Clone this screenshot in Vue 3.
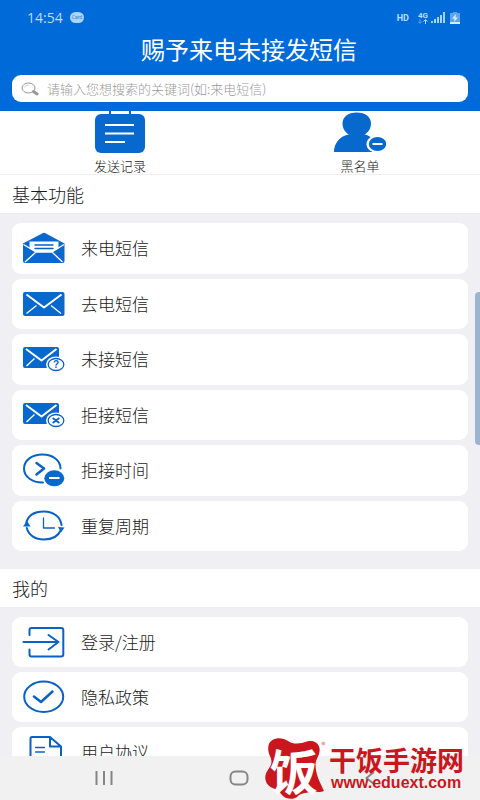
<script setup>
import { ref } from 'vue'

const keyword = ref('')

const basicItems = [
  { icon: 'open', label: '来电短信' },
  { icon: 'mail', label: '去电短信' },
  { icon: 'missed', label: '未接短信' },
  { icon: 'reject', label: '拒接短信' },
  { icon: 'time', label: '拒接时间' },
  { icon: 'cycle', label: '重复周期' }
]

const mineItems = [
  { icon: 'login', label: '登录/注册' },
  { icon: 'privacy', label: '隐私政策' },
  { icon: 'terms', label: '用户协议' }
]

const sections = [
  { title: '基本功能', items: basicItems, name: 'basic' },
  { title: '我的', items: mineItems, name: 'mine' }
]
</script>

<template>
  <div class="screen">
    <header class="top">
      <div class="status">
        <span class="clock">14:54</span>
        <span class="chip">Card</span>
        <span class="hd">HD</span>
        <span class="net">
          <span>4G</span>
          <svg width="10" height="5" viewBox="0 0 10 5" aria-hidden="true">
            <path d="M2 0V4M0 2.500L2 4.500L4 2.500" class="dim" />
            <path d="M7.500 5V1M5.500 2.500L7.500 .5L9.500 2.500" />
          </svg>
        </span>
        <svg class="signal" width="14" height="11" viewBox="0 0 14 11" aria-hidden="true">
          <path d="M0 9h2v2H0zM3 7h2v4H3zM6 5h2v6H6zM9 3h2v8H9zM12 0h2v11h-2z" />
        </svg>
        <svg class="battery" width="10" height="12" viewBox="0 0 10 12" aria-hidden="true">
          <path class="cell" d="M3 0h4v1h3v11H0V1h3z" />
          <path class="charge" d="M0 10h10v2H0z" />
          <path class="bolt" d="M6 2L2 6.500H4.500L4 10L8 5.500H5.500z" />
        </svg>
      </div>
      <h1>赐予来电未接发短信</h1>
      <label class="search">
        <svg width="18" height="14" viewBox="0 0 18 14" aria-hidden="true">
          <ellipse cx="7.500" cy="6" rx="6.500" ry="5" />
          <path d="M3.500 5.500Q4.500 3 7.500 3" class="glint" />
          <path d="M12.500 9.500L16 12" class="handle" />
        </svg>
        <input v-model="keyword" type="search" aria-label="搜索" placeholder="请输入您想搜索的关键词(如:来电短信)" />
      </label>
    </header>

    <main class="content">
      <div class="quick">
        <button type="button">
          <svg width="52" height="44" viewBox="0 0 52 44" aria-hidden="true">
            <path class="fill" d="M15 0h2v4h-2zM35 0h2v4h-2z" />
            <rect class="fill" x="1" y="3" width="50" height="39" rx="6" />
            <path class="paper" d="M11 14H40M11 22.500H40M11 31H31" />
          </svg>
          <span>发送记录</span>
        </button>
        <button type="button">
          <svg width="52" height="44" viewBox="0 0 52 44" aria-hidden="true">
            <path class="fill" d="M0 41C0 32 6 25 15 23.500C11 21.500 8.500 17 8.500 12.500C8.500 6 14 1.500 22.700 1.500S37 6 37 12.500C37 17 34.500 21.500 30.500 23.500C34 24 36 25.500 38 27.500V41z" />
            <ellipse cx="43.500" cy="33" rx="11" ry="9" fill="#fff" />
            <ellipse class="fill" cx="43.500" cy="33" rx="8.700" ry="6.900" />
            <path class="paper" d="M38.500 33H48.500" />
          </svg>
          <span>黑名单</span>
        </button>
      </div>

      <section v-for="section in sections" :key="section.name">
        <h2>{{ section.title }}</h2>
        <ul :class="section.name">
          <li v-for="item in section.items" :key="item.icon">
            <button type="button" class="row">
              <svg width="44" height="36" viewBox="0 0 44 36" aria-hidden="true">
                <g v-if="item.icon === 'open'">
                  <path class="fill" d="M1 13.500L20.500 3.200Q22 2.400 23.500 3.200L42.500 13.500V31Q42.500 33 40.500 33H3Q1 33 1 31z" />
                  <path fill="#fff" d="M7.500 11.500H36.500V18.500L30 22H14L7.500 18.500z" />
                  <path class="cut thin" d="M1.500 14.500L14 22H30L42 14.500M3 32L13.500 22.500M40.500 32L30.500 22.500" />
                  <path class="line thin" d="M13 15H31M13 18.500H31" />
                </g>
                <g v-else-if="item.icon === 'mail'">
                  <rect class="fill" x="1" y="6" width="41.500" height="24" rx="2" />
                  <path class="cut" d="M4.500 8.500L22 21.500L39.500 8.500" />
                  <path class="cut thin" d="M4.500 27.500L14.500 19.500M39 27.500L29 19.500" />
                </g>
                <g v-else-if="item.icon === 'missed' || item.icon === 'reject'">
                  <rect class="fill" x="1" y="6" width="36" height="21" rx="2" />
                  <path class="cut" d="M4 8L19.500 19.500L34.500 8" />
                  <path class="cut thin" d="M4.500 25L12.500 17.500" />
                  <ellipse cx="34" cy="23.500" rx="10" ry="8" fill="#fff" />
                  <ellipse class="line thin" cx="34" cy="23.500" rx="7.800" ry="6" />
                  <text v-if="item.icon === 'missed'" x="34" y="27" text-anchor="middle">?</text>
                  <path v-else class="line" d="M31.300 21.500L36.700 25.500M36.700 21.500L31.300 25.500" />
                </g>
                <g v-else-if="item.icon === 'time'">
                  <path class="line" d="M21 30.500C10.500 30.800 2 24.800 2 16.500S10.200 2.500 20.500 2.500S38.500 8.500 38.500 16.500" />
                  <path class="line wide" d="M14.500 11L22 16.500L14.500 22.500" />
                  <ellipse class="fill" cx="32.300" cy="26.300" rx="10" ry="8" />
                  <path class="cut" d="M27 26H37.500" />
                </g>
                <g v-else-if="item.icon === 'cycle'">
                  <path class="line" d="M4 16C5.500 8 12 3.500 22 3.500C31.500 3.500 38.500 9 39.500 17M39 22C36.500 27.500 30.500 31.500 22 31.500C13 31.500 6.500 27 4.800 20" />
                  <path class="fill" d="M1 18.500L5 13L8.500 18.500zM36 19L42.500 19.500L39 24.500z" />
                  <path class="line thin" d="M21.500 10V20H32.500" />
                </g>
                <g v-else-if="item.icon === 'login'">
                  <path class="line" d="M7.500 11V6Q7.500 4 9.500 4H39Q41.300 4 41.300 6V30.500Q41.300 32.500 39 32.500H9.500Q7.500 32.500 7.500 30.500V25.500" />
                  <path class="line" d="M1.500 18H36.500M26.500 11L36.500 18L26.500 25.500" />
                </g>
                <g v-else-if="item.icon === 'privacy'">
                  <ellipse class="line" cx="21.700" cy="17.800" rx="19.500" ry="15.200" />
                  <path class="line wide" d="M12 17.500L19 23L30.500 12.500" />
                </g>
                <g v-else>
                  <path class="line" d="M28 3H10Q8.500 3 8.500 4.500V34H39V12.500L28 3V12.500H39" />
                  <path class="line thin" d="M13.500 13.500H22.500M13.500 18H22.500M13.500 24H33" />
                </g>
              </svg>
              <span>{{ item.label }}</span>
            </button>
          </li>
        </ul>
      </section>
    </main>

    <nav class="keys" aria-label="系统导航">
      <button type="button" aria-label="最近任务">
        <svg width="18" height="14" viewBox="0 0 18 14"><path d="M1.500 0V14M9 0V14M16.500 0V14" /></svg>
      </button>
      <button type="button" aria-label="主屏幕">
        <svg width="20" height="16" viewBox="0 0 20 16"><rect x="1.500" y="1.500" width="17" height="13" rx="5" /></svg>
      </button>
      <button type="button" aria-label="返回">
        <svg width="10" height="14" viewBox="0 0 10 14"><path d="M9 1L1.500 7L9 13" /></svg>
      </button>
    </nav>

    <div class="thumb"></div>

    <div class="brand">
      <div class="seal">
        <svg width="62" height="63" viewBox="0 0 62 63" aria-hidden="true">
          <path d="M10 2.700C14 .5 20 .5 25 4C31 8 38 6.500 44 4.500C50 3 55 5 56.500 11C57.500 18 53 21 52.500 27C52.500 38 57 45 61 54C56 56 52 54 48 55C42 56 37 56 34 60C30 63 23 62 19.500 58.500C17 56 17 54 13.500 52.500C8 50.500 4 49 2.500 43C1 34 8 32 8.500 25C8.500 20 5.500 18 5.300 13C5 8 6 5 10 2.700Z" />
        </svg>
        <span>饭</span>
        <small>®</small>
      </div>
      <div class="words">
        <strong>干饭手游网</strong>
        <span>www.eduext.com</span>
      </div>
    </div>
  </div>
</template>

<style>
body {
  background: #efeff4;
}
</style>

<style scoped>
.screen {
  position: relative;
  display: flex;
  flex-direction: column;
  height: 100vh;
  overflow: hidden;
  background: #efeff4;
  color: #1a1a1a;
  font-family: "Noto Sans CJK SC", sans-serif;
  font-weight: 300;
}

button {
  padding: 0;
  border: 0;
  background: none;
  color: inherit;
  font: inherit;
}

svg {
  display: block;
  flex: none;
}

.top {
  flex: none;
  padding-bottom: 9px;
  background: #006bd8;
  color: #fff;
}

.status {
  display: flex;
  align-items: center;
  height: 35px;
  padding: 0 20px 0 27px;
  color: #b9dcff;
  font-family: Roboto, sans-serif;
  font-weight: 400;
}

.clock {
  font-family: "Open Sans", sans-serif;
  font-size: 14px;
}

.chip {
  margin-left: 7px;
  padding: 0 2px;
  border-radius: 6px;
  background: #a9d4fb;
  color: #3c80c4;
  font-size: 5px;
  line-height: 11px;
}

.hd {
  margin-left: auto;
  font-size: 9px;
  font-weight: 700;
}

.net {
  display: grid;
  justify-items: center;
  margin-left: 9px;
  font-size: 8px;
  font-weight: 700;
  line-height: 7px;
}

.net path {
  fill: none;
  stroke: #b9dcff;
}

.net .dim {
  stroke: #5c9fe4;
}

.signal {
  margin-left: 3px;
  fill: #a5d2fb;
}

.battery {
  margin-left: 5px;
}

.cell {
  fill: #5fa5e6;
}

.charge,
.bolt {
  fill: #d6eeff;
}

h1 {
  margin: 0 0 13px;
  padding-left: 18px;
  font-size: 24px;
  font-weight: 400;
  line-height: 27px;
  text-align: center;
}

.search {
  display: flex;
  align-items: center;
  gap: 8px;
  height: 27px;
  margin: 0 12px;
  padding: 0 9px;
  border-radius: 9px;
  background: #fff;
}

.search svg {
  fill: none;
  stroke: #999;
}

.search .glint {
  stroke: #ccc;
}

.search .handle {
  stroke-width: 3;
  stroke-linecap: round;
}

.search input {
  flex: 1;
  min-width: 0;
  padding: 0;
  border: 0;
  outline: 0;
  background: none;
  color: #333;
  font: inherit;
  font-size: 13px;
}

.search input::placeholder {
  color: #999;
}

.content {
  flex: 1;
  min-height: 0;
  overflow: hidden;
}

.quick {
  display: grid;
  grid-template-columns: 1fr 1fr;
  border-bottom: 1px solid #eee;
  background: #fff;
}

.quick button {
  display: flex;
  flex-direction: column;
  align-items: center;
  gap: 3px;
  font-size: 13px;
  line-height: 16px;
}

.fill {
  fill: #0768ce;
}

.paper {
  fill: none;
  stroke: #fff;
  stroke-width: 2;
}

h2 {
  margin: 0;
  padding: 0 12px;
  border-bottom: 1px solid #eee;
  background: #fff;
  font-size: 18px;
  font-weight: 300;
  line-height: 38px;
}

ul {
  display: grid;
  grid-auto-rows: 1fr;
  gap: 5px;
  margin: 0;
  padding: 9px 12px 18px;
  list-style: none;
}

.basic {
  min-height: 328px;
}

li {
  display: grid;
  min-height: 50px;
}

.row {
  display: flex;
  align-items: center;
  gap: 15px;
  padding: 0 10px;
  border-radius: 9px;
  background: #fff;
  font-size: 17px;
  line-height: 24px;
  text-align: left;
}

.cut,
.line {
  fill: none;
  stroke: #fff;
  stroke-width: 2;
  stroke-linejoin: round;
}

.line {
  stroke: #0a62c4;
  stroke-linecap: round;
}

.thin {
  stroke-width: 1.3;
}

.wide {
  stroke-width: 2.5;
}

.row text {
  fill: #0a62c4;
  font: 700 10px "Liberation Sans", sans-serif;
}

.keys {
  display: flex;
  flex: none;
  align-items: center;
  justify-content: space-between;
  height: 44px;
  padding: 0 105px 0 95px;
  background: #f1f1f1;
}

.keys path,
.keys rect {
  fill: none;
  stroke: #858585;
  stroke-width: 2;
}

.thumb {
  position: absolute;
  top: 292px;
  right: 0;
  width: 5px;
  height: 153px;
  border-radius: 4px 0 0 4px;
  background: #9bb5d0;
}

.brand {
  position: absolute;
  right: 16px;
  bottom: 0;
  display: flex;
  align-items: center;
  gap: 4px;
  color: #ca171d;
}

.seal {
  position: relative;
  fill: #ca171d;
}

.seal span {
  position: absolute;
  top: 8px;
  left: 7px;
  color: #fff;
  font-size: 48px;
  font-weight: 700;
  line-height: 48px;
}

.seal small {
  position: absolute;
  top: 4px;
  right: 0;
  font-size: 8px;
  line-height: 8px;
}

.words {
  display: grid;
  gap: 1px;
}

.words strong {
  font-size: 27px;
  font-weight: 700;
  line-height: 28px;
}

.words span {
  padding-left: 2px;
  font: 700 16px "Liberation Sans", sans-serif;
  line-height: 16px;
}
</style>
